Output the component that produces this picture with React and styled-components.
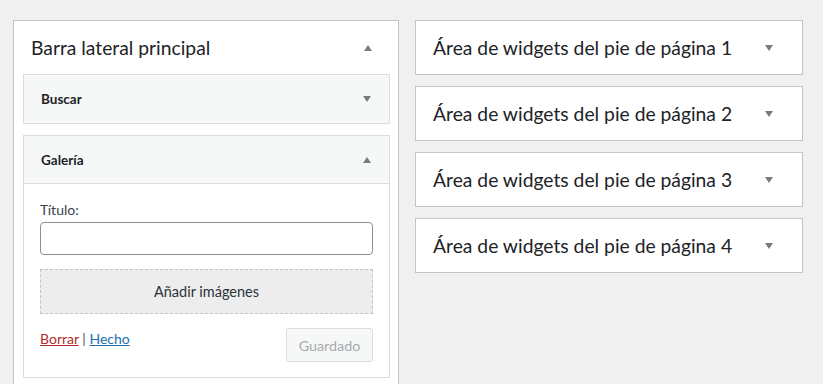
import React from "react";
import styled, { createGlobalStyle } from "styled-components";

const Global = createGlobalStyle`
  html, body { margin: 0; padding: 0; background: #f0f0f1; }
  body { font-family: Lato, "Noto Sans", sans-serif; color: #1d2327; }
  * { box-sizing: border-box; }
`;

const Page = styled.div`
  display: flex;
  align-items: flex-start;
  gap: 16px;
  padding: 20px 0 0 13px;
  height: 384px;
  overflow: hidden;
`;

const Sidebar = styled.section`
  width: 386px;
  background: #fff;
  border: 1px solid #c3c4c7;
  padding: 0 8px 20px 9px;
`;

const SidebarHead = styled.div`
  display: flex;
  align-items: center;
  justify-content: space-between;
  height: 53px;
  padding: 0 18px 0 8px;
`;

const Title = styled.h2`
  margin: 0;
  font-size: 19.3px;
  font-weight: 400;
  white-space: nowrap;
  color: #1d2327;
`;

const Widget = styled.div`
  border: 1px solid #dcdcde;
  background: #fff;
  & + & { margin-top: 11px; }
`;

const WidgetHead = styled.div`
  display: flex;
  align-items: center;
  justify-content: space-between;
  height: 48px;
  padding: 0 18px 0 17px;
  background: #f6f7f7;
  border-bottom: ${(p) => (p.$open ? "1px solid #dcdcde" : "none")};
  font-size: 13.5px;
  font-weight: 700;
  color: #1d2327;
`;

const WidgetBody = styled.div`
  padding: 16px 16px 15px 16px;
`;

const Label = styled.label`
  display: block;
  font-size: 14px;
  line-height: 20px;
  color: #3c434a;
  margin-bottom: 2px;
`;

const TextInput = styled.input`
  display: block;
  width: 100%;
  height: 33px;
  border: 1px solid #8c8f94;
  border-radius: 4px;
  background: #fff;
  font: inherit;
  padding: 0 8px;
`;

const AddImages = styled.button`
  display: block;
  width: 100%;
  height: 45px;
  margin-top: 14px;
  border: 1px dashed #c3c4c7;
  background: #ededee;
  font-family: inherit;
  font-size: 14.5px;
  color: #2c3338;
`;

const Footer = styled.div`
  display: flex;
  justify-content: space-between;
  align-items: flex-start;
  margin-top: 14px;
`;

const Links = styled.div`
  font-size: 14px;
  line-height: 20px;
  color: #50575e;
  padding-top: 1px;
`;

const Link = styled.a`
  color: ${(p) => (p.$danger ? "#b32d2e" : "#2271b1")};
  text-decoration: underline;
`;

const SaveButton = styled.button`
  width: 87px;
  height: 34px;
  border: 1px solid #dcdcde;
  border-radius: 3px;
  background: #f6f7f7;
  color: #a7aaad;
  font-family: inherit;
  font-size: 14.3px;
`;

const Column = styled.div`
  display: flex;
  flex-direction: column;
  gap: 11px;
  width: 388px;
`;

const Area = styled.div`
  display: flex;
  align-items: center;
  justify-content: space-between;
  height: 55px;
  padding: 0 29px 0 17px;
  background: #fff;
  border: 1px solid #c3c4c7;
`;

const ArrowSvg = styled.svg`
  width: 8px;
  height: 6px;
  flex: none;
  fill: #787c82;
`;

const Arrow = ({ up }) => (
  <ArrowSvg viewBox="0 0 8 6">
    {up ? <polygon points="0,6 4,0 8,6" /> : <polygon points="0,0 8,0 4,6" />}
  </ArrowSvg>
);

export default function App() {
  return (
    <>
      <Global />
      <Page>
        <Sidebar>
          <SidebarHead>
            <Title>Barra lateral principal</Title>
            <Arrow up />
          </SidebarHead>
          <Widget>
            <WidgetHead>
              <span>Buscar</span>
              <Arrow />
            </WidgetHead>
          </Widget>
          <Widget>
            <WidgetHead $open>
              <span>Galería</span>
              <Arrow up />
            </WidgetHead>
            <WidgetBody>
              <Label>Título:</Label>
              <TextInput type="text" />
              <AddImages>Añadir imágenes</AddImages>
              <Footer>
                <Links>
                  <Link $danger href="#">Borrar</Link> | <Link href="#">Hecho</Link>
                </Links>
                <SaveButton disabled>Guardado</SaveButton>
              </Footer>
            </WidgetBody>
          </Widget>
        </Sidebar>
        <Column>
          {[1, 2, 3, 4].map((n) => (
            <Area key={n}>
              <Title>Área de widgets del pie de página {n}</Title>
              <Arrow />
            </Area>
          ))}
        </Column>
      </Page>
    </>
  );
}
